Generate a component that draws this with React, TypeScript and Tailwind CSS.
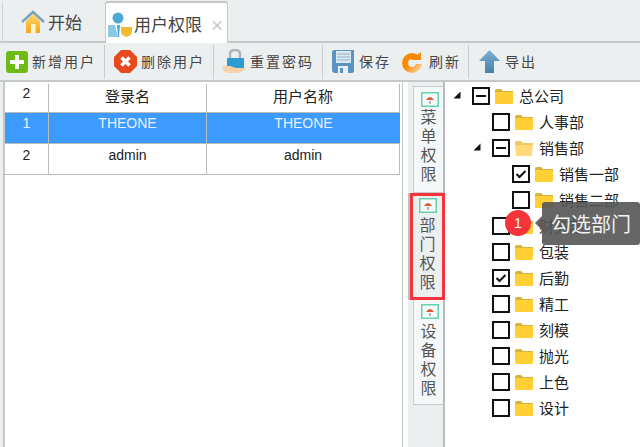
import React from 'react';

const font = { fontFamily: '"Noto Sans CJK SC", "Liberation Sans", sans-serif' };
const latin = { fontFamily: '"Liberation Sans", sans-serif' };

const Folder = ({ open }: { open?: boolean }) => (
    <svg width="18" height="15" viewBox="0 0 18 15" className="shrink-0">
        <path d="M0 2 Q0 0 2 0 H6 L8 2 H18 V4 H0 Z" fill={open ? '#f2c868' : '#d9b23c'} />
        {open
            ? <path d="M0 4 H18 L17 14 Q17 15 16 15 H2 Q1 15 1 14 Z" fill="#ffd97a" />
            : <rect x="0" y="3" width="18" height="12" rx="1" fill="#ffcf33" />}
    </svg>
);

const Arrow = () => (
    <svg width="8" height="8" viewBox="0 0 8 8">
        <path d="M7.5 0.5 V7.5 H0.5 Z" fill="#111" />
    </svg>
);

const Box = ({ mark }: { mark?: 'check' | 'part' }) => (
    <div className="w-[18px] h-[18px] border-2 border-[#111] bg-white flex items-center justify-center shrink-0">
        {mark === 'check' && (
            <svg width="12" height="10" viewBox="0 0 12 10">
                <path d="M1.5 5 L4.5 8 L10.5 2" fill="none" stroke="#111" strokeWidth="2" />
            </svg>
        )}
        {mark === 'part' && <div className="w-[10px] h-[2px] bg-[#111]" />}
    </div>
);

type RowProps = { indent: string; arrow?: boolean; open?: boolean; mark?: 'check' | 'part'; label: string };

const TreeRow = ({ indent, arrow, open, mark, label }: RowProps) => (
    <div className={`h-[26px] flex items-center ${indent}`}>
        <div className="w-[20px] pl-[1px] pb-[2px] flex justify-start shrink-0">{arrow && <Arrow />}</div>
        <Box mark={mark} />
        <div className="ml-[5px] flex"><Folder open={open} /></div>
        <span className="ml-[6px] text-[15px] text-[#222] whitespace-nowrap">{label}</span>
    </div>
);

const Seal = () => (
    <svg width="18" height="15" viewBox="0 0 18 15" className="shrink-0">
        <rect x="0.75" y="0.75" width="16.5" height="13.5" fill="#f4f8f8" stroke="#66d3ae" strokeWidth="1.5" />
        <path d="M5 8 Q9 2 13 8 Z" fill="#e05a3a" />
        <rect x="8.5" y="9" width="1" height="3" fill="#777" />
    </svg>
);

const SideTab = ({ label, className, seal, text }: { label: string[]; className: string; seal: string; text: string }) => (
    <div className={`flex flex-col items-center ${className}`}>
        <div className={`flex ${seal}`}><Seal /></div>
        <div className={`flex flex-col items-center text-[16px] leading-[19px] text-[#555] ${text}`}>
            {label.map((c, i) => <span key={i}>{c}</span>)}
        </div>
    </div>
);

const ToolBtn = ({ icon, label, className, gap }: { icon: React.ReactNode; label: string; className: string; gap: string }) => (
    <div className={`flex items-center h-full shrink-0 ${className}`}>
        <div className="flex shrink-0">{icon}</div>
        <span className={`${gap} text-[14px] tracking-[2px] text-[#444] whitespace-nowrap`}>{label}</span>
    </div>
);

const Sep = () => <div className="w-px h-[34px] bg-[#c8cccc] shrink-0" />;

const App: React.FC = () => {
    return (
        <div className="w-[640px] h-[447px] overflow-hidden bg-[#ebeff0] flex flex-col" style={font}>
            {/* tabs */}
            <div className="h-[43px] flex items-end pl-[2px] border-b-2 border-[#c4c8c8] shrink-0">
                <div className="w-px h-[41px] bg-[#d0d4d4] -mb-[2px]" />
                <div className="w-[102px] h-[41px] flex items-center pl-[18px] pt-[3px]">
                    <svg width="24" height="24" viewBox="0 0 24 24" className="shrink-0">
                        <defs>
                            <linearGradient id="homeFill" x1="0" y1="0" x2="0" y2="1">
                                <stop offset="0" stopColor="#ffd76a" />
                                <stop offset="1" stopColor="#f2a51e" />
                            </linearGradient>
                        </defs>
                        <path d="M5 11 L12 4 L19 11 V23 H5 Z" fill="url(#homeFill)" />
                        <rect x="10" y="14" width="4.5" height="9" fill="#fff6d0" />
                        <path d="M1 12 L12 2 L23 12" fill="none" stroke="#7ba3bd" strokeWidth="2.5" />
                    </svg>
                    <span className="ml-[3px] text-[17px] text-[#444]">开始</span>
                </div>
                <div className="w-[123px] h-[42px] -mb-[2px] bg-white border-t-2 border-x border-[#c4c8c8] border-b-0 rounded-t-[3px] flex items-center pl-[2px] pt-[2px]">
                    <svg width="24" height="25" viewBox="0 0 24 25" className="shrink-0">
                        <circle cx="10" cy="6" r="5.5" fill="#4ea8d8" />
                        <path d="M0 13 H7 L10 25 H0 Z" fill="#8cc8e4" />
                        <path d="M9 13 H12 L11 25 H10 Z" fill="#4ea8d8" />
                        <path d="M13 15 H24 V20 Q24 23 18.5 25 Q13 23 13 20 Z" fill="#f2bb2e" />
                    </svg>
                    <span className="ml-[2px] text-[17px] text-[#444] whitespace-nowrap">用户权限</span>
                    <span className="ml-[8px] text-[14px] font-bold text-[#c4c8cc]">×</span>
                </div>
            </div>

            {/* toolbar */}
            <div className="h-[37px] flex items-center pl-[6px] shrink-0">
                <ToolBtn className="w-[98px]" gap="ml-[4px]" label="新增用户" icon={
                    <div className="w-[22px] h-[22px] rounded-[3px] bg-[#6ebb16] flex items-center justify-center">
                        <svg width="14" height="14" viewBox="0 0 14 14"><path d="M5 0 H9 V5 H14 V9 H9 V14 H5 V9 H0 V5 H5 Z" fill="#fff" /></svg>
                    </div>
                } />
                <Sep />
                <ToolBtn className="w-[108px] pl-[9px]" gap="ml-[4px]" label="删除用户" icon={
                    <svg width="23" height="23" viewBox="0 0 23 23">
                        <path d="M7 0 H16 L23 7 V16 L16 23 H7 L0 16 V7 Z" fill="#e8491c" />
                        <path d="M7.5 7.5 L15.5 15.5 M15.5 7.5 L7.5 15.5" stroke="#fff" strokeWidth="3.5" />
                    </svg>
                } />
                <Sep />
                <ToolBtn className="w-[108px] pl-[8px]" gap="ml-[3px]" label="重置密码" icon={
                    <svg width="25" height="25" viewBox="0 0 25 25">
                        <path d="M8 9 V5 Q8 1 13 1 Q18 1 18 5 V9" fill="none" stroke="#b0b4b8" strokeWidth="2.5" />
                        <rect x="5" y="9" width="17" height="11" fill="#2f9bd0" />
                        <path d="M0 17 H8 L14 19 H24 Q20 24 14 24 H6 Q2 24 0 17 Z" fill="#f9d2aa" />
                    </svg>
                } />
                <Sep />
                <ToolBtn className="w-[79px] pl-[9px]" gap="ml-[5px]" label="保存" icon={
                    <svg width="22" height="23" viewBox="0 0 22 23">
                        <path d="M2 0 H22 V21 Q22 23 20 23 H3 Q0 23 0 20 V2 Q0 0 2 0 Z" fill="#5d93c0" />
                        <rect x="4" y="1" width="15" height="12" fill="#dbe8f2" />
                        <path d="M5 4 H18 M5 7 H18 M5 10 H18" stroke="#8fb4d2" strokeWidth="1" />
                        <rect x="6" y="16" width="10" height="7" fill="#e8f0f6" />
                        <rect x="8" y="18" width="3" height="5" fill="#5d93c0" />
                    </svg>
                } />
                <ToolBtn className="w-[66px]" gap="ml-[7px]" label="刷新" icon={
                    <svg width="20" height="22" viewBox="0 0 20 22">
                        <defs>
                            <linearGradient id="refreshFill" x1="0" y1="0" x2="1" y2="1">
                                <stop offset="0.45" stopColor="#f98a06" />
                                <stop offset="1" stopColor="#fbe3c4" />
                            </linearGradient>
                        </defs>
                        <circle cx="10" cy="12" r="10" fill="url(#refreshFill)" />
                        <path d="M10 8 A4 4 0 1 0 14 13 H20 V8 Z" fill="#ebeff0" />
                        <path d="M9 9 L19 9 L19 1 Z" fill="#f98a06" />
                    </svg>
                } />
                <Sep />
                <ToolBtn className="pl-[10px]" gap="ml-[5px]" label="导出" icon={
                    <svg width="21" height="23" viewBox="0 0 21 23">
                        <defs>
                            <linearGradient id="upFill" x1="0" y1="0" x2="0" y2="1">
                                <stop offset="0" stopColor="#7fb0d0" />
                                <stop offset="1" stopColor="#4680ac" />
                            </linearGradient>
                        </defs>
                        <path d="M10.5 0 L21 11 H15 V23 H6 V11 H0 Z" fill="url(#upFill)" />
                    </svg>
                } />
            </div>

            {/* main */}
            <div className="flex-1 flex min-h-0 border-t-2 border-[#c4c8c8] pl-[3px]">
                {/* grid */}
                <div className="w-[400px] h-full bg-white border-l-2 border-r border-[#c4c8c8] pr-[2px] shrink-0 text-[14px] text-[#222]">
                    <div className="grid grid-cols-[43px_158px_1fr] h-[30px]">
                        <div className="text-center leading-[22px]" style={latin}>2</div>
                        <div className="text-center text-[15px] leading-[24px] mt-[2px] border-l border-[#b8bcbc]">登录名</div>
                        <div className="text-center text-[15px] leading-[24px] mt-[2px] border-x border-[#b8bcbc]">用户名称</div>
                    </div>
                    <div className="grid grid-cols-[43px_158px_1fr] h-[32px] bg-[#3d9bff] text-[#e8f2ff] border-y border-[#b8bcbc]" style={latin}>
                        <div className="text-center leading-[21px]">1</div>
                        <div className="text-center leading-[21px] border-l border-[#b8bcbc]">THEONE</div>
                        <div className="text-center leading-[21px] border-l border-[#b8bcbc]">THEONE</div>
                    </div>
                    <div className="grid grid-cols-[43px_158px_1fr] h-[31px] border-b border-[#b8bcbc]" style={latin}>
                        <div className="text-center leading-[22px]">2</div>
                        <div className="text-center leading-[22px] border-l border-[#b8bcbc]">admin</div>
                        <div className="text-center leading-[22px] border-x border-[#b8bcbc]">admin</div>
                    </div>
                </div>

                <div className="w-[5px] bg-white shrink-0" />

                {/* side tabs */}
                <div className="w-[37px] shrink-0 pl-[5px] pt-[4px] border-r-2 border-[#b8bcbc]">
                    <SideTab label={['菜', '单', '权', '限']} seal="ml-[3px] mt-[5px]" text="" className="w-[30px] h-[107px] border border-[#c8cccc] border-r-0 bg-[#f5f8f8]" />
                    <SideTab label={['部', '门', '权', '限']} seal="mt-[2px]" text="mt-[2px]" className="w-[35px] h-[107px] -ml-[3px] border-[3px] border-[#f5333a] shadow-[-2px_0_0_#bbbfbf]" />
                    <SideTab label={['设', '备', '权', '限']} seal="ml-[3px] mt-[4px]" text="mt-[2px]" className="w-[30px] h-[105px] border border-[#c8cccc] border-t-0 border-r-0 bg-[#f5f8f8]" />
                </div>

                {/* tree */}
                <div className="flex-1 bg-white relative pl-[7px] pt-[1px] min-w-0">
                    <TreeRow indent="ml-0" arrow mark="part" label="总公司" />
                    <TreeRow indent="ml-[20px]" label="人事部" />
                    <TreeRow indent="ml-[20px]" arrow open mark="part" label="销售部" />
                    <TreeRow indent="ml-[40px]" mark="check" label="销售一部" />
                    <TreeRow indent="ml-[40px]" label="销售二部" />
                    <TreeRow indent="ml-[20px]" label="财务部" />
                    <TreeRow indent="ml-[20px]" label="包装" />
                    <TreeRow indent="ml-[20px]" mark="check" label="后勤" />
                    <TreeRow indent="ml-[20px]" label="精工" />
                    <TreeRow indent="ml-[20px]" label="刻模" />
                    <TreeRow indent="ml-[20px]" label="抛光" />
                    <TreeRow indent="ml-[20px]" label="上色" />
                    <TreeRow indent="ml-[20px]" label="设计" />

                    {/* tooltip */}
                    <div className="absolute left-[60px] top-[128px] w-[26px] h-[26px] rounded-full bg-[#f5333a] text-white text-[14px] flex items-center justify-center z-10" style={latin}>1</div>
                    <div className="absolute left-[90px] top-[134px] w-0 h-0 border-y-[7px] border-y-transparent border-r-[7px] border-r-[#555]/90" />
                    <div className="absolute left-[97px] top-[120px] w-[98px] h-[43px] rounded-[3px] bg-[#555]/90 text-[#f2f2f2] text-[20px] flex items-center justify-center whitespace-nowrap">勾选部门</div>
                </div>
            </div>
        </div>
    );
};

export default App;
